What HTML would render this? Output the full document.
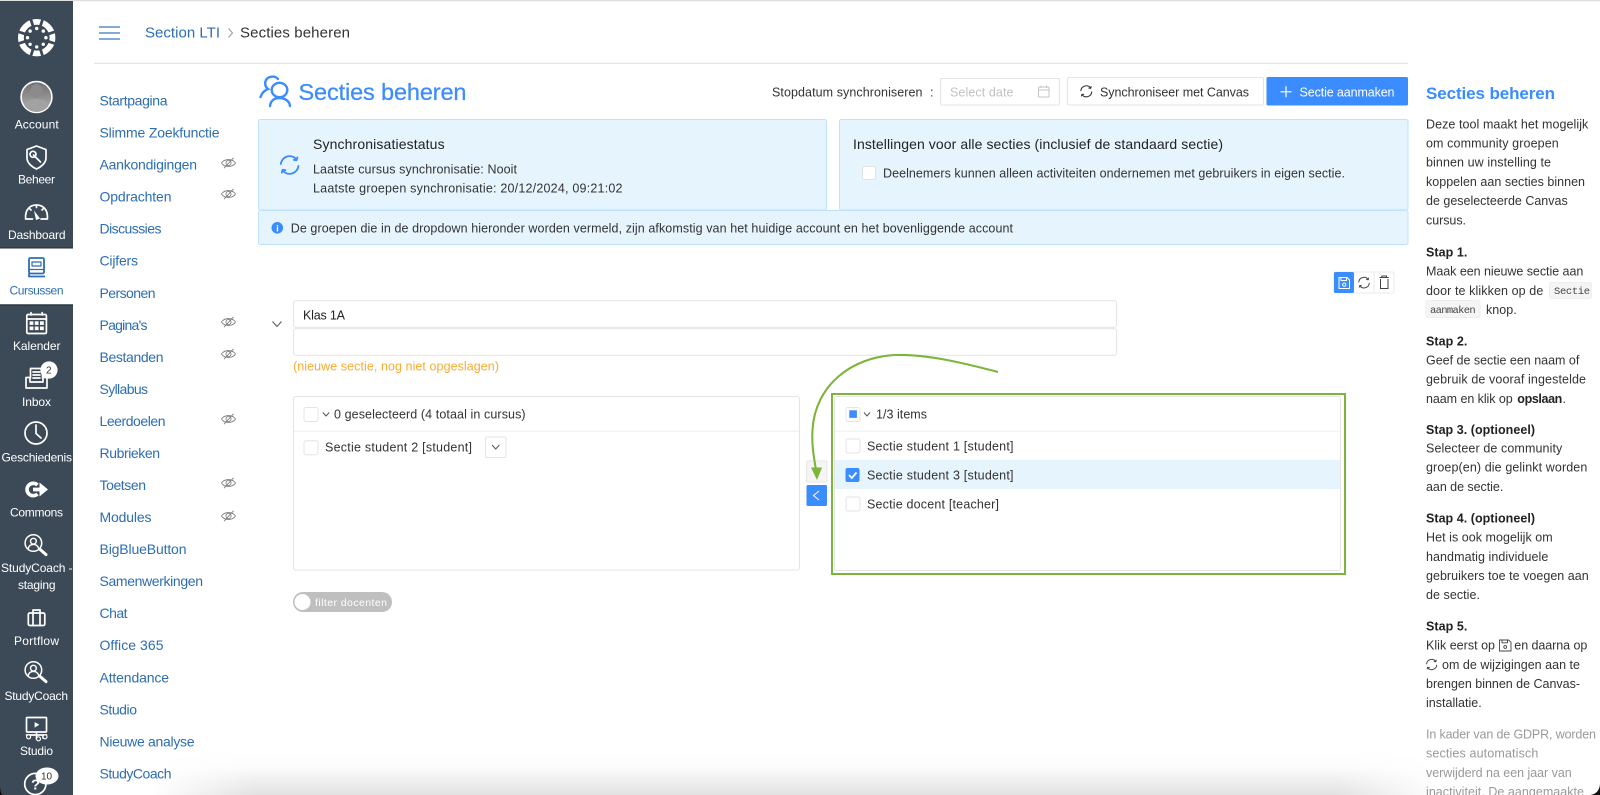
<!DOCTYPE html>
<html lang="nl">
<head>
<meta charset="utf-8">
<title>Secties beheren</title>
<style>
html,body{margin:0;padding:0;background:#fff;width:1600px;height:795px;overflow:hidden}
svg{display:block;position:absolute;left:0;top:0;filter:blur(.25px)}
text{font-family:"Liberation Sans",Arial,sans-serif;white-space:pre}
.side{font-size:12px;fill:#fff}
.nav{font-size:14px;fill:#2d6db1}
.m{font-size:12.5px;fill:#333}
.h{font-size:12.5px;fill:#333}
.hb{font-size:12.5px;fill:#222;font-weight:bold}
.g{font-size:12.5px;fill:#999}
.c{font-family:"Liberation Mono",monospace;font-size:10.5px;fill:#444}
.ic{fill:none;stroke:#fff;stroke-width:1.7;stroke-linecap:round;stroke-linejoin:round}
.box{fill:#fff;stroke:#e4e4e4;stroke-width:1}
.chev{fill:none;stroke:#555;stroke-width:1}
</style>
</head>
<body>
<svg width="1600" height="795" viewBox="0 0 1600 795" xmlns="http://www.w3.org/2000/svg">
<defs>
  <g id="eye" fill="none" stroke="#777" stroke-width=".8">
    <path d="M-7 0C-4-4.6 4-4.6 7 0C4 4.6-4 4.6-7 0Z"/>
    <circle r="2.6"/>
    <path d="M-4.5 5.2L5-5.2"/>
  </g>
  <g id="sync" fill="none" stroke-linecap="round" stroke-linejoin="round">
    <path d="M-8.8-1A8.9 8.9 0 0 1 7-5.5"/>
    <path d="M8.8 1A8.9 8.9 0 0 1-7 5.5"/>
    <path d="M7.8-7.6L7-4.8L4.2-5.2"/>
    <path d="M-7.8 7.6L-7 4.8L-4.2 5.2"/>
  </g>
  <g id="coach" class="ic" stroke-width="1.5">
    <circle cx="0" cy="0" r="8.3" stroke-width="1.5"/>
    <circle cx="0" cy="-1.8" r="2.9" stroke-width="1.4"/>
    <path d="M-5.2 5.4C-4.4 2.4-2 1.4 0 1.4S4.4 2.4 5.2 5.4" stroke-width="1.4"/>
    <path d="M6.6 6.4L12.6 11.6" stroke-width="3"/>
  </g>
  <linearGradient id="vg" x1="0" y1="0" x2="0" y2="1">
    <stop offset="0" stop-color="#000" stop-opacity="0"/>
    <stop offset=".4" stop-color="#000" stop-opacity=".015"/>
    <stop offset="1" stop-color="#000" stop-opacity=".115"/>
  </linearGradient>
  <linearGradient id="hg" x1="0" y1="0" x2="1" y2="0">
    <stop offset="0" stop-color="#fff" stop-opacity="0"/>
    <stop offset=".08" stop-color="#fff"/>
    <stop offset=".92" stop-color="#fff"/>
    <stop offset="1" stop-color="#fff" stop-opacity="0"/>
  </linearGradient>
  <linearGradient id="av" x1="0" y1="0" x2="0" y2="1">
    <stop offset="0" stop-color="#6f6f6f"/>
    <stop offset="1" stop-color="#b2b2b2"/>
  </linearGradient>
  <mask id="hm" maskUnits="userSpaceOnUse" x="150" y="750" width="1290" height="45">
    <rect x="150" y="750" width="1290" height="45" fill="url(#hg)"/>
  </mask>
</defs>

<rect width="1600" height="795" fill="#fff"/>
<rect width="1600" height="1.2" fill="#dedede"/>

<!-- ===== Sidebar ===== -->
<rect x="0" y="1" width="73" height="794" fill="#3c4a58"/>
<rect x="0" y="247.5" width="73" height="1.2" fill="#1f2b36"/>
<rect x="0" y="248.5" width="73" height="56" fill="#fff"/>
<rect x="0" y="304.3" width="73" height="1.2" fill="#1f2b36"/>

<!-- logo -->
<g transform="translate(36.7 37.7)" fill="#fff">
  <circle r="15.8" fill="none" stroke="#fff" stroke-width="5.8"/>
  <g stroke="#3c4a58" stroke-width="2.8">
    <path d="M-22-7.1L-11-3.5M22 7.1L11 3.5M-22 7.1L-11 3.5M22-7.1L11-3.5M-7.1-22L-3.5-11M7.1 22L3.5 11M7.1-22L3.5-11M-7.1 22L-3.5 11"/>
  </g>
  <g>
    <circle cx="0" cy="-9.2" r="1.7"/><circle cx="6.6" cy="-6.6" r="1.7"/>
    <circle cx="9.2" cy="0" r="1.7"/><circle cx="6.6" cy="6.6" r="1.7"/>
    <circle cx="0" cy="9.2" r="1.7"/><circle cx="-6.6" cy="6.6" r="1.7"/>
    <circle cx="-9.2" cy="0" r="1.7"/><circle cx="-6.6" cy="-6.6" r="1.7"/>
  </g>
</g>

<!-- avatar -->
<circle cx="36.5" cy="97" r="15.4" fill="url(#av)" stroke="#fff" stroke-width="1.6"/>
<ellipse cx="36.5" cy="91" rx="6" ry="7" fill="#8b8b8b"/>
<path d="M24.5 106C26 100 31 99 36.5 99S47 100 48.5 106C45 110.5 40 112 36.5 112S28 110.5 24.5 106Z" fill="#a2a2a2"/>
<text class="side" x="14.7" y="128.5" textLength="44">Account</text>

<!-- Beheer -->
<path class="ic" d="M36.5 146L46 149.6V158C46 163 41 167 36.5 169C32 167 27 163 27 158V149.6Z"/>
<path class="ic" d="M33.5 155L40.5 162" stroke-width="2"/>
<circle class="ic" cx="33" cy="154.3" r="3" stroke-width="1.4"/>
<text class="side" x="18" y="183.5" textLength="37">Beheer</text>

<!-- Dashboard -->
<path class="ic" d="M32.5 219H25.6C24.8 209 30.5 205 36.5 205S48.2 209 47.4 219H41"/>
<path d="M34 210.5L40 218.5L36 220Z" fill="#fff"/>
<path class="ic" d="M36.5 205.5V207.5M29.5 208.5L31 210M43.5 208.5L42 210" stroke-width="1.1"/>
<text class="side" x="8" y="239" textLength="57.5">Dashboard</text>

<!-- Cursussen -->
<g fill="none" stroke="#2d6db1" stroke-width="1.8" stroke-linejoin="round">
  <rect x="29" y="258" width="15" height="15.5" rx="1.5"/>
  <path d="M32 262H41V266H32Z" stroke-width="1.2"/>
  <path d="M29 273.5V276.5H45" />
  <path d="M29 269.5H44" stroke-width="1.2"/>
</g>
<text class="side" style="fill:#2d6db1" x="9.5" y="294.5" textLength="54">Cursussen</text>

<!-- Kalender -->
<rect class="ic" x="26.8" y="314.5" width="19.6" height="19" rx="1.3"/>
<path class="ic" d="M26.8 319H46.4M31 312.6V315M42.2 312.6V315" stroke-width="1.4"/>
<g fill="#fff">
  <rect x="29.6" y="321.3" width="3.8" height="3.6"/><rect x="34.8" y="321.3" width="3.8" height="3.6"/><rect x="40" y="321.3" width="3.8" height="3.6"/>
  <rect x="29.6" y="326.5" width="3.8" height="3.6"/><rect x="34.8" y="326.5" width="3.8" height="3.6"/><rect x="40" y="326.5" width="3.8" height="3.6"/>
</g>
<text class="side" x="13" y="350" textLength="47.5">Kalender</text>

<!-- Inbox -->
<path class="ic" d="M30.5 378V368.5H42.5V378M33 372H40M33 375H40M33 378H40" stroke-width="1.5"/>
<path class="ic" d="M30 377.5H26V388H47V377.5H43V382H30Z"/>
<circle cx="49" cy="370" r="8.6" fill="#fff"/>
<text x="46" y="373.6" style="font-size:10px;fill:#333">2</text>
<text class="side" x="22" y="406" textLength="29">Inbox</text>

<!-- Geschiedenis -->
<circle class="ic" cx="36" cy="433" r="11" stroke-width="1.8"/>
<path class="ic" d="M36 425V433.5L41 438"/>
<text class="side" x="1.5" y="461.5" textLength="70.5">Geschiedenis</text>

<!-- Commons -->
<path d="M37.5 485A6.2 6.2 0 1 0 37.5 494" fill="none" stroke="#fff" stroke-width="3.6"/>
<path d="M33 487.6H39.5V482.5L48 489.5L39.5 496.5V491.4H33Z" fill="#fff"/>
<text class="side" x="10" y="516.5" textLength="53">Commons</text>

<!-- StudyCoach staging -->
<use href="#coach" x="33.4" y="543"/>
<text class="side" x="1" y="572" textLength="71.5">StudyCoach -</text>
<text class="side" x="18" y="589" textLength="37.5">staging</text>

<!-- Portflow -->
<rect class="ic" x="28.3" y="613" width="16.5" height="12.5" rx="1.5"/>
<path class="ic" d="M33 613V610H40V613M33 613V625.5M40 613V625.5" stroke-width="1.4"/>
<text class="side" x="14" y="645" textLength="45">Portflow</text>

<!-- StudyCoach -->
<use href="#coach" x="33.4" y="670"/>
<text class="side" x="4.5" y="700" textLength="63.5">StudyCoach</text>

<!-- Studio -->
<rect class="ic" x="26.5" y="717.5" width="20" height="14.5" rx=".8" stroke-width="1.5"/>
<path d="M34.6 722L39.4 724.8L34.6 727.6Z" fill="#fff"/>
<path class="ic" d="M26.5 735H46.5M30 735V738M36.5 732V739M43 735V738" stroke-width="1.2"/>
<circle cx="28.6" cy="736.8" r="2" fill="#3c4a58" stroke="#fff" stroke-width="1.2"/>
<circle cx="38.5" cy="738.8" r="2" fill="#3c4a58" stroke="#fff" stroke-width="1.2"/>
<circle cx="45" cy="736.8" r="2" fill="#3c4a58" stroke="#fff" stroke-width="1.2"/>
<text class="side" x="20" y="755" textLength="33">Studio</text>

<!-- Help -->
<circle class="ic" cx="35.3" cy="784" r="10.6" stroke-width="2"/>
<text x="31" y="789.5" style="font-size:15px;font-weight:bold;fill:#fff">?</text>
<ellipse cx="47" cy="776" rx="11.5" ry="8.5" fill="#fff"/>
<text x="41" y="779.6" style="font-size:10px;fill:#333">10</text>

<path d="M0 786Q.5 794.5 3 795H0Z" fill="#0c0c0c"/>

<!-- ===== Top bar ===== -->
<g fill="none" stroke="#5a8dc5" stroke-width="1.5">
  <path d="M99 27H120M99 33H120M99 39H120"/>
</g>
<text x="145" y="37.5" textLength="75" style="font-size:15px;fill:#2d6db1">Section LTI</text>
<path d="M228.5 28.5L232.5 33L228.5 37.5" fill="none" stroke="#999" stroke-width="1"/>
<text x="240" y="37.5" textLength="110" style="font-size:15px;fill:#333">Secties beheren</text>
<rect x="94" y="62.7" width="1314" height="1.1" fill="#dfdfdf"/>

<!-- ===== Course nav ===== -->
<g transform="translate(-.5 0)">
<text class="nav" x="100" y="105.5" textLength="68">Startpagina</text>
<text class="nav" x="100" y="137.5" textLength="120">Slimme Zoekfunctie</text>
<text class="nav" x="100" y="169.5" textLength="97.5">Aankondigingen</text>
<text class="nav" x="100" y="201.5" textLength="72">Opdrachten</text>
<text class="nav" x="100" y="233.5" textLength="62">Discussies</text>
<text class="nav" x="100" y="265.5" textLength="38.5">Cijfers</text>
<text class="nav" x="100" y="298" textLength="56">Personen</text>
<text class="nav" x="100" y="330" textLength="48">Pagina's</text>
<text class="nav" x="100" y="362" textLength="64">Bestanden</text>
<text class="nav" x="100" y="394" textLength="48.5">Syllabus</text>
<text class="nav" x="100" y="426" textLength="66">Leerdoelen</text>
<text class="nav" x="100" y="458" textLength="60.5">Rubrieken</text>
<text class="nav" x="100" y="490" textLength="46.5">Toetsen</text>
<text class="nav" x="100" y="522" textLength="52">Modules</text>
<text class="nav" x="100" y="554" textLength="87">BigBlueButton</text>
<text class="nav" x="100" y="586" textLength="103.5">Samenwerkingen</text>
<text class="nav" x="100" y="618" textLength="28">Chat</text>
<text class="nav" x="100" y="650" textLength="64">Office 365</text>
<text class="nav" x="100" y="682.5" textLength="69.5">Attendance</text>
<text class="nav" x="100" y="714.5" textLength="37.5">Studio</text>
<text class="nav" x="100" y="746.5" textLength="95">Nieuwe analyse</text>
<text class="nav" x="100" y="778.5" textLength="72">StudyCoach</text>
</g>
<use href="#eye" x="228.5" y="163"/>
<use href="#eye" x="228.5" y="194"/>
<use href="#eye" x="228.5" y="322"/>
<use href="#eye" x="228.5" y="354"/>
<use href="#eye" x="228.5" y="419"/>
<use href="#eye" x="228.5" y="483"/>
<use href="#eye" x="228.5" y="516"/>

<!-- ===== Page head ===== -->
<g fill="none" stroke="#3b8cff" stroke-width="2.4" stroke-linecap="round">
  <ellipse cx="279.5" cy="90" rx="7.8" ry="7.2"/>
  <path d="M270 106C270.5 101 274 98 279.5 98S289.5 101 290 106"/>
  <path d="M260.5 97C262 93 265 90 268 89C265 87 264.5 83 266 80C268 76.5 274.5 75 278 79"/>
</g>
<text x="298.5" y="100" textLength="168" style="font-size:23.5px;fill:#3b8cff;stroke:#3b8cff;stroke-width:.25px">Secties beheren</text>

<text class="m" x="772" y="96.5" textLength="150.5">Stopdatum synchroniseren</text>
<text class="m" x="930" y="96.5">:</text>

<rect x="940.5" y="78.5" width="119" height="26.5" rx="1.5" class="box"/>
<text class="m" style="fill:#c2c2c2" x="950" y="96.5" textLength="63.5">Select date</text>
<g fill="none" stroke="#c4c4c4" stroke-width="1">
  <rect x="1038.5" y="87" width="10.5" height="10" rx=".8"/>
  <path d="M1038.5 90H1049M1041 85.5V88M1046.5 85.5V88"/>
</g>

<rect x="1067.5" y="77.5" width="196" height="27.5" rx="1.5" class="box"/>
<g transform="translate(1086.3 91.3) scale(.62)" stroke="#333" stroke-width="1.7"><use href="#sync"/></g>
<text class="m" x="1100" y="96.5" textLength="149">Synchroniseer met Canvas</text>

<rect x="1266.5" y="77" width="141.5" height="28.5" rx="1.5" fill="#3b8cff"/>
<path d="M1286 86.3V97.3M1280.5 91.8H1291.5" stroke="#fff" stroke-width="1.2"/>
<text class="m" style="fill:#fff" x="1299.5" y="96.5" textLength="95">Sectie aanmaken</text>

<!-- ===== Info cards ===== -->
<rect x="258.5" y="119.5" width="568" height="90.5" rx="2" fill="#e6f4fe" stroke="#bfe2fc"/>
<rect x="839.5" y="119.5" width="568.5" height="90.5" rx="2" fill="#e6f4fe" stroke="#bfe2fc"/>
<rect x="258.5" y="210.5" width="1149.5" height="34" rx="2" fill="#e6f4fe" stroke="#bfe2fc"/>

<g transform="translate(289.6 165)" stroke="#3b8cff" stroke-width="1.8"><use href="#sync"/></g>
<text x="313" y="149" textLength="131.6" style="font-size:14px;fill:#222">Synchronisatiestatus</text>
<text class="m" x="313" y="173.5" textLength="204">Laatste cursus synchronisatie: Nooit</text>
<text class="m" x="313" y="192.5" textLength="309.5">Laatste groepen synchronisatie: 20/12/2024, 09:21:02</text>

<text x="853" y="149" textLength="370" style="font-size:14px;fill:#222">Instellingen voor alle secties (inclusief de standaard sectie)</text>
<rect x="862.5" y="166.5" width="13" height="13" rx="2" fill="#fff" stroke="#e2e2e2"/>
<text class="m" x="883" y="177.5" textLength="462">Deelnemers kunnen alleen activiteiten ondernemen met gebruikers in eigen sectie.</text>

<circle cx="277.3" cy="227.8" r="5.8" fill="#3b8cff"/>
<text x="276.1" y="231.5" style="font-size:9.5px;font-weight:bold;fill:#fff">i</text>
<text class="m" x="290.7" y="232.5" textLength="722.3">De groepen die in de dropdown hieronder worden vermeld, zijn afkomstig van het huidige account en het bovenliggende account</text>

<!-- ===== Toolbar ===== -->
<rect x="1334" y="272" width="60" height="21" rx="1.5" fill="#fff" stroke="#eaeaea"/>
<rect x="1334" y="272" width="20" height="21" rx="1.5" fill="#3b8cff"/>
<path d="M1374 272V293" stroke="#eaeaea"/>
<g fill="none" stroke="#fff" stroke-width="1">
  <path d="M1339 277.5H1347L1349.5 280V288.5H1339Z"/>
  <path d="M1341 277.5V280.5H1346.5V277.5"/>
  <circle cx="1344.2" cy="284.6" r="1.6"/>
</g>
<g transform="translate(1364 282.6) scale(.6)" stroke="#444" stroke-width="1.6"><use href="#sync"/></g>
<g fill="none" stroke="#444" stroke-width="1">
  <path d="M1379.5 277.5H1388.7M1381.8 277.5V276H1386.5V277.5"/>
  <path d="M1380.5 279V288.5H1388V279"/>
</g>

<!-- ===== Section form ===== -->
<path d="M272.5 321.5L277 326.5L281.5 321.5" class="chev"/>
<rect x="293.5" y="300.7" width="823" height="26.5" rx="2" class="box"/>
<rect x="293.5" y="328.8" width="823" height="26.5" rx="2" class="box"/>
<text class="m" style="fill:#222" x="303" y="319.5" textLength="42">Klas 1A</text>
<text class="m" style="fill:#f9ab33" x="293" y="370.5" textLength="206">(nieuwe sectie, nog niet opgeslagen)</text>

<!-- left list -->
<rect x="293.5" y="396.5" width="506" height="173.5" rx="2" class="box"/>
<path d="M294 431.3H799" stroke="#efefef"/>
<rect x="304" y="407.5" width="14" height="14" rx="2" class="box"/>
<path d="M322.8 412.5L326 416L329.2 412.5" class="chev"/>
<text class="m" x="334" y="418.5" textLength="191.6">0 geselecteerd (4 totaal in cursus)</text>
<rect x="304" y="440.7" width="14" height="14" rx="2" class="box"/>
<text class="m" x="325" y="451.5" textLength="147">Sectie student 2 [student]</text>
<rect x="485.5" y="437" width="20.5" height="20.5" rx="1.5" class="box"/>
<path d="M492 445L495.7 449L499.4 445" class="chev"/>

<!-- transfer buttons -->
<rect x="806.5" y="461" width="20.5" height="21" rx="1.5" fill="#f5f5f5" stroke="#e6e6e6"/>
<rect x="806.5" y="485" width="20.5" height="21" rx="1.5" fill="#3b8cff"/>
<path d="M819 491L813.5 495.5L819 500" fill="none" stroke="#fff" stroke-width="1"/>

<!-- right list -->
<rect x="834.5" y="396.5" width="506" height="174" rx="2" class="box"/>
<path d="M835 431.3H1340" stroke="#efefef"/>
<rect x="846" y="407.5" width="14" height="14" rx="2" class="box"/>
<rect x="849.3" y="410.3" width="7.6" height="7.6" fill="#3b8cff"/>
<path d="M864 412.5L867 416L870 412.5" class="chev"/>
<text class="m" x="876" y="418.5" textLength="51">1/3 items</text>
<rect x="835" y="460" width="505" height="29" fill="#e6f4fe"/>
<rect x="846" y="439" width="14" height="14" rx="2" class="box"/>
<text class="m" x="867" y="450.5" textLength="146.5">Sectie student 1 [student]</text>
<rect x="845.5" y="468" width="14" height="14" rx="2" fill="#3b8cff"/>
<path d="M849 475L851.8 478L856.5 472.5" fill="none" stroke="#fff" stroke-width="1.8"/>
<text class="m" x="867" y="479.5" textLength="146.5">Sectie student 3 [student]</text>
<rect x="846" y="497" width="14" height="14" rx="2" class="box"/>
<text class="m" x="867" y="508.5" textLength="132">Sectie docent [teacher]</text>

<!-- green annotation -->
<rect x="832" y="394" width="513" height="180" fill="none" stroke="#7cb53a" stroke-width="2"/>
<path d="M998 372C960 362 925 354 895 355C852 357 815 385 812.5 430C811.5 445 814 458 816 470" fill="none" stroke="#7cb53a" stroke-width="2.1"/>
<path d="M811 467.5L822 467.5L817 480Z" fill="#7cb53a"/>

<!-- toggle -->
<rect x="293" y="592" width="99" height="20" rx="10" fill="#bfbfbf"/>
<circle cx="302.5" cy="602" r="8" fill="#fff"/>
<text x="315" y="605.8" textLength="72" style="font-size:10.5px;fill:#fff">filter docenten</text>

<!-- ===== Help panel ===== -->
<text x="1426" y="99" textLength="129" style="font-size:17px;font-weight:bold;fill:#3b8cff">Secties beheren</text>
<text class="h" x="1426" y="128.5" textLength="162.3">Deze tool maakt het mogelijk</text>
<text class="h" x="1426" y="147.5" textLength="132.7">om community groepen</text>
<text class="h" x="1426" y="166.7" textLength="125">binnen uw instelling te</text>
<text class="h" x="1426" y="186" textLength="159">koppelen aan secties binnen</text>
<text class="h" x="1426" y="205.2" textLength="141.7">de geselecteerde Canvas</text>
<text class="h" x="1426" y="224.5" textLength="40">cursus.</text>

<text class="hb" x="1426" y="256.5" textLength="41.3">Stap 1.</text>
<text class="h" x="1426" y="275.6" textLength="157.3">Maak een nieuwe sectie aan</text>
<text class="h" x="1426" y="294.8" textLength="117.3">door te klikken op de</text>
<rect x="1549.5" y="282.5" width="42" height="16" rx="2" fill="#f5f5f5" stroke="#eee"/>
<text class="c" x="1554" y="294" textLength="36">Sectie</text>
<rect x="1426" y="300.5" width="54" height="17" rx="2" fill="#f5f5f5" stroke="#eee"/>
<text class="c" x="1430" y="313" textLength="45.7">aanmaken</text>
<text class="h" x="1486" y="314" textLength="30.7">knop.</text>

<text class="hb" x="1426" y="345.5" textLength="41.3">Stap 2.</text>
<text class="h" x="1426" y="364.5" textLength="153.3">Geef de sectie een naam of</text>
<text class="h" x="1426" y="383.7" textLength="160">gebruik de vooraf ingestelde</text>
<text class="h" x="1426" y="402.8" textLength="86.7">naam en klik op</text>
<text class="hb" x="1517.3" y="402.8" textLength="45">opslaan</text>
<text class="h" x="1562.5" y="402.8">.</text>

<text class="hb" x="1426" y="434" textLength="109">Stap 3. (optioneel)</text>
<text class="h" x="1426" y="452.5" textLength="136.3">Selecteer de community</text>
<text class="h" x="1426" y="471.7" textLength="161.3">groep(en) die gelinkt worden</text>
<text class="h" x="1426" y="491" textLength="77.3">aan de sectie.</text>

<text class="hb" x="1426" y="522.5" textLength="109">Stap 4. (optioneel)</text>
<text class="h" x="1426" y="541.7" textLength="126.7">Het is ook mogelijk om</text>
<text class="h" x="1426" y="560.8" textLength="122.3">handmatig individuele</text>
<text class="h" x="1426" y="580" textLength="162.7">gebruikers toe te voegen aan</text>
<text class="h" x="1426" y="599.2" textLength="54">de sectie.</text>

<text class="hb" x="1426" y="630.5" textLength="41.3">Stap 5.</text>
<text class="h" x="1426" y="649.6" textLength="69">Klik eerst op</text>
<g fill="none" stroke="#444" stroke-width=".9">
  <path d="M1499.5 640H1508.5L1511 642.3V651H1499.5Z"/>
  <path d="M1502 640V642.8H1507.5V640"/>
  <circle cx="1505.2" cy="647" r="1.4"/>
</g>
<text class="h" x="1514.3" y="649.6" textLength="73">en daarna op</text>
<g transform="translate(1431.7 664.5) scale(.58)" stroke="#444" stroke-width="1.7"><use href="#sync"/></g>
<text class="h" x="1442" y="668.8" textLength="138">om de wijzigingen aan te</text>
<text class="h" x="1426" y="687.8" textLength="154">brengen binnen de Canvas-</text>
<text class="h" x="1426" y="707" textLength="55.7">installatie.</text>

<text class="g" x="1426" y="738.6" textLength="170">In kader van de GDPR, worden</text>
<text class="g" x="1426" y="757.7" textLength="112.3">secties automatisch</text>
<text class="g" x="1426" y="777" textLength="145.7">verwijderd na een jaar van</text>
<text class="g" x="1426" y="796" textLength="158">inactiviteit. De aangemaakte</text>

<!-- bottom shadow and corner -->
<rect x="150" y="750" width="1290" height="45" fill="url(#vg)" mask="url(#hm)"/>
<path d="M1600 783C1600 790 1596 795 1589 795H1600Z" fill="#111"/>
</svg>
</body>
</html>
